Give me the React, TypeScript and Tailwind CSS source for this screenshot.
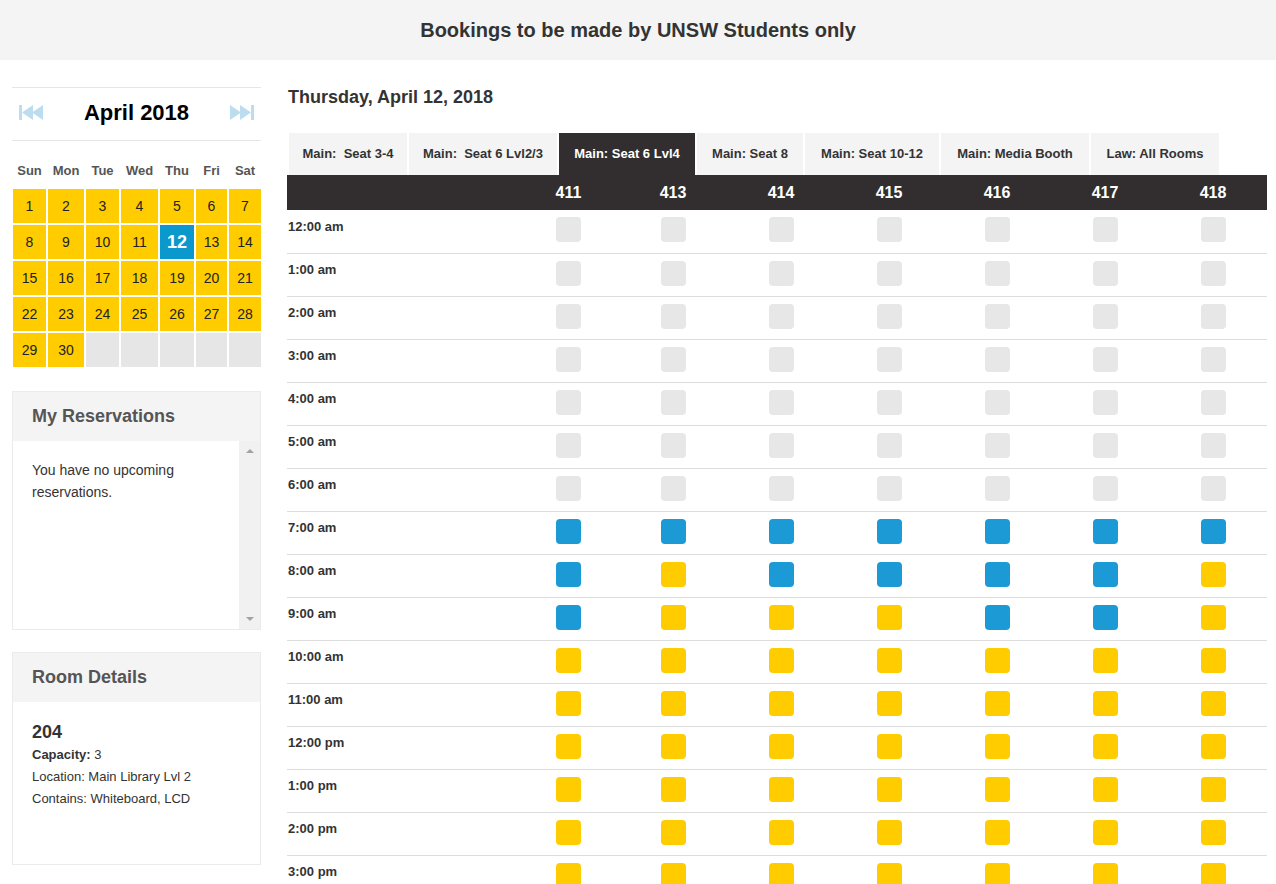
import React from "react";

const calCols = "grid grid-cols-[33px_36px_33px_37px_34px_31px_32px] gap-[2px]";
const weekDays = ["Sun", "Mon", "Tue", "Wed", "Thu", "Fri", "Sat"];

const tabs = [
  { label: "Main:\u00a0 Seat 3-4", w: "w-[118px]" },
  { label: "Main:\u00a0 Seat 6 Lvl2/3", w: "w-[148px]" },
  { label: "Main: Seat 6 Lvl4", w: "w-[136px]", active: true },
  { label: "Main: Seat 8", w: "w-[106px]" },
  { label: "Main: Seat 10-12", w: "w-[134px]" },
  { label: "Main: Media Booth", w: "w-[148px]" },
  { label: "Law: All Rooms", w: "w-[128px]" },
];

const rooms = ["411", "413", "414", "415", "416", "417", "418"];
const tableCols = "grid grid-cols-[231px_101px_108px_108px_108px_108px_108px_108px]";

const hours = [
  "12:00 am", "1:00 am", "2:00 am", "3:00 am", "4:00 am", "5:00 am", "6:00 am",
  "7:00 am", "8:00 am", "9:00 am", "10:00 am", "11:00 am", "12:00 pm", "1:00 pm",
  "2:00 pm", "3:00 pm", "4:00 pm", "5:00 pm", "6:00 pm", "7:00 pm",
];

// g = closed, b = booked, y = free
const slots: Record<number, string> = {
  7: "bbbbbbb",
  8: "bybbbby",
  9: "byyybby",
};

function slotRow(i: number) {
  if (i < 7) return "ggggggg";
  return slots[i] ?? "yyyyyyy";
}

const slotColor: Record<string, string> = {
  g: "bg-[#e7e7e7]",
  b: "bg-[#1b9ad6]",
  y: "bg-[#ffcc00]",
};

function SkipIcon({ dir }: { dir: "left" | "right" }) {
  return (
    <svg width="26" height="15" viewBox="0 0 26 15" className={dir === "right" ? "scale-x-[-1]" : ""}>
      <rect x="0" y="0" width="3" height="15" fill="#bcdcef" />
      <polygon points="3,7.5 14,0 14,15" fill="#bcdcef" />
      <polygon points="13,7.5 24,0 24,15" fill="#bcdcef" />
    </svg>
  );
}

function Calendar() {
  const cells: (number | null)[] = [];
  for (let d = 1; d <= 30; d++) cells.push(d);
  while (cells.length < 35) cells.push(null);

  return (
    <div>
      <div className="h-[54px] border-y border-[#e6e6e6] flex items-center justify-between pl-[7px] pr-[7px] pb-[3px]">
        <SkipIcon dir="left" />
        <span className="text-[22px] font-bold text-black">April 2018</span>
        <SkipIcon dir="right" />
      </div>
      <div className={`${calCols} pl-[1px] pt-[22px] h-[48px]`}>
        {weekDays.map((d) => (
          <div key={d} className="text-center text-[13px] font-bold text-[#555] leading-[16px]">
            {d}
          </div>
        ))}
      </div>
      <div className={`${calCols} pl-[1px] auto-rows-[34px]`}>
        {cells.map((d, i) =>
          d === null ? (
            <div key={i} className="bg-[#e6e6e6]" />
          ) : d === 12 ? (
            <div key={i} className="bg-[#0b98cc] text-white font-bold text-[18px] flex items-center justify-center">
              {d}
            </div>
          ) : (
            <div key={i} className="bg-[#ffcc00] text-[#222] text-[14px] flex items-center justify-center">
              {d}
            </div>
          )
        )}
      </div>
    </div>
  );
}

function Panel({ title, children, className }: { title: string; children: React.ReactNode; className: string }) {
  return (
    <div className={`border border-[#ebebeb] flex flex-col ${className}`}>
      <div className="h-[49px] bg-[#f4f4f4] flex items-center px-[19px] text-[18px] font-bold text-[#555] shrink-0">
        {title}
      </div>
      {children}
    </div>
  );
}

export default function App() {
  return (
    <div className="w-full h-[884px] overflow-hidden bg-white font-['Liberation_Sans',Arial,sans-serif] text-[#333]">
      <div className="h-[60px] bg-[#f4f4f4] flex items-center justify-center text-[20px] font-bold text-[#333]">
        Bookings to be made by UNSW Students only
      </div>

      <div className="flex gap-[26px] pl-[12px] pt-[27px]">
        <aside className="w-[249px] shrink-0">
          <Calendar />

          <Panel title="My Reservations" className="mt-[24px] h-[239px]">
            <div className="flex flex-1">
              <div className="flex-1 px-[19px] pt-[18px] text-[14px] leading-[22px] text-[#333]">
                You have no upcoming reservations.
              </div>
              <div className="w-[21px] bg-[#f1f1f1] flex flex-col items-center justify-between py-[8px]">
                <span className="w-0 h-0 border-x-[4px] border-x-transparent border-b-[4px] border-b-[#a3a3a3]" />
                <span className="w-0 h-0 border-x-[4px] border-x-transparent border-t-[4px] border-t-[#a3a3a3]" />
              </div>
            </div>
          </Panel>

          <Panel title="Room Details" className="mt-[22px] h-[213px]">
            <div className="px-[19px] pt-[19px] text-[13px] text-[#333]">
              <div className="text-[18px] font-bold leading-[22px]">204</div>
              <div className="leading-[22px] mt-[1px]">
                <span className="font-bold">Capacity:</span> 3
              </div>
              <div className="leading-[22px]">Location: Main Library Lvl 2</div>
              <div className="leading-[22px]">Contains: Whiteboard, LCD</div>
            </div>
          </Panel>
        </aside>

        <main className="w-[980px] shrink-0">
          <h1 className="text-[18px] font-bold leading-[20px] pl-[1px] text-[#333]">Thursday, April 12, 2018</h1>

          <div className="flex gap-[2px] pl-[2px] mt-[26px]">
            {tabs.map((t) => (
              <div
                key={t.label}
                className={`${t.w} h-[42px] flex items-center justify-center text-[13px] font-bold whitespace-pre ${
                  t.active ? "bg-[#322e2f] text-white" : "bg-[#f4f4f4] text-[#333]"
                }`}
              >
                {t.label}
              </div>
            ))}
          </div>

          <div className={`${tableCols} h-[35px] bg-[#322e2f] items-center`}>
            <div />
            {rooms.map((r) => (
              <div key={r} className="text-center text-white font-bold text-[16px]">
                {r}
              </div>
            ))}
          </div>

          {hours.map((h, i) => (
            <div key={h} className={`${tableCols} ${i === 0 ? "h-[44px]" : "h-[43px]"} border-b border-[#dddddd]`}>
              <div className={`pl-[1px] ${i === 0 ? "pt-[9px]" : "pt-[8px]"} text-[13px] font-bold leading-[15px] text-[#333]`}>
                {h}
              </div>
              {slotRow(i)
                .split("")
                .map((c, j) => (
                  <div key={j} className="flex justify-center pt-[7px]">
                    <div className={`w-[25px] h-[25px] rounded-[4px] ${slotColor[c]}`} />
                  </div>
                ))}
            </div>
          ))}
        </main>
      </div>
    </div>
  );
}
